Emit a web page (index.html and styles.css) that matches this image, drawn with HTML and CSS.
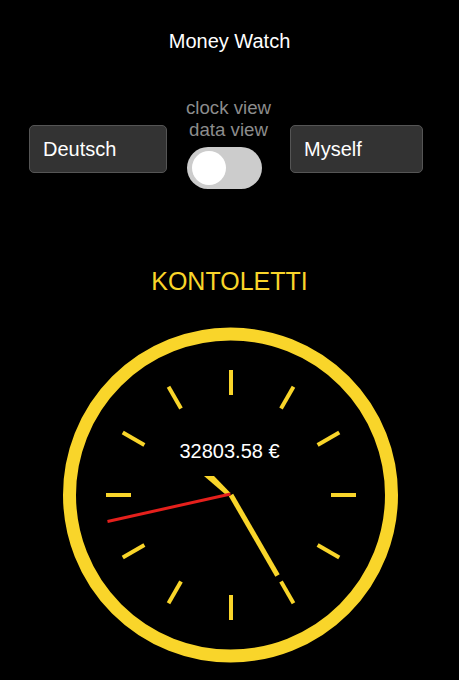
FILE: index.html
```html
<!DOCTYPE html>
<html lang="de">
<head>
    <meta charset="UTF-8">
    <meta name="viewport" content="width=device-width, initial-scale=1.0">
    <title>Money Watch</title>
    <link rel="stylesheet" href="styles.css">
</head>
<body>
    <h1 class="title">Money Watch</h1>

    <div class="controls">
        <select class="picker lang">
            <option>Deutsch</option>
            <option>English</option>
        </select>

        <div class="view-switch">
            <div class="view-label">clock view<br>data view</div>
            <label class="toggle">
                <input type="checkbox" id="viewToggle">
                <span class="knob"></span>
            </label>
        </div>

        <select class="picker person">
            <option>Myself</option>
        </select>
    </div>

    <h2 class="account">KONTOLETTI</h2>

    <svg class="clock" width="340" height="340" viewBox="0 0 340 340">
        <!-- Rahmen -->
        <circle cx="170.5" cy="170" r="161" fill="none" stroke="#f9d52a" stroke-width="13"/>
        <g transform="translate(171,170)">
            <!-- Stundenstriche -->
            <g stroke="#f9d52a" stroke-width="4">
                <line x1="0" y1="-125" x2="0" y2="-100"/>
                <line x1="0" y1="-125" x2="0" y2="-100" transform="rotate(30)"/>
                <line x1="0" y1="-125" x2="0" y2="-100" transform="rotate(60)"/>
                <line x1="0" y1="-125" x2="0" y2="-100" transform="rotate(90)"/>
                <line x1="0" y1="-125" x2="0" y2="-100" transform="rotate(120)"/>
                <line x1="0" y1="-125" x2="0" y2="-100" transform="rotate(150)"/>
                <line x1="0" y1="-125" x2="0" y2="-100" transform="rotate(180)"/>
                <line x1="0" y1="-125" x2="0" y2="-100" transform="rotate(210)"/>
                <line x1="0" y1="-125" x2="0" y2="-100" transform="rotate(240)"/>
                <line x1="0" y1="-125" x2="0" y2="-100" transform="rotate(270)"/>
                <line x1="0" y1="-125" x2="0" y2="-100" transform="rotate(300)"/>
                <line x1="0" y1="-125" x2="0" y2="-100" transform="rotate(330)"/>
            </g>
            <!-- Kontostand -->
            <text class="balance" x="-1.5" y="-37" text-anchor="middle">32803.58 €</text>
            <!-- Zeiger -->
            <line x1="0" y1="0" x2="0" y2="-93" stroke="#f9d52a" stroke-width="5" transform="rotate(150)"/>
            <polygon points="-27,-19 -17,-19 -0.5,-2 -5.5,-0.5" fill="#f9d52a"/>
            <line x1="-0.5" y1="-1" x2="-123.5" y2="26.5" stroke="#e5201c" stroke-width="3"/>
        </g>
    </svg>
</body>
</html>
```

FILE: styles.css
```css
body {
    margin: 0;
    background-color: #000;
    color: #fff;
    font-family: "Liberation Sans", Arial, sans-serif;
}
.title {
    margin: 0;
    padding-top: 30px;
    font-size: 20px;
    font-weight: normal;
    line-height: 23px;
    text-align: center;
}
.controls {
    display: flex;
    align-items: flex-start;
    margin-top: 44px;
    padding-left: 29px;
}
.picker {
    appearance: none;
    -webkit-appearance: none;
    box-sizing: border-box;
    height: 48px;
    margin-top: 28px;
    padding: 0 13px;
    background-color: #333;
    color: #fff;
    border: 1px solid #555;
    border-radius: 5px;
    font-family: "Liberation Sans", Arial, sans-serif;
    font-size: 20px;
}
.lang {
    width: 138px;
}
.person {
    width: 133px;
}
.view-switch {
    margin: 0 19px;
}
.view-label {
    color: #8c8c8c;
    font-size: 18.67px;
    line-height: 21.5px;
    text-align: center;
}
.toggle {
    display: block;
    position: relative;
    width: 75px;
    height: 42px;
    margin-top: 7px;
    margin-left: 1px;
    background-color: #ccc;
    border-radius: 21px;
    cursor: pointer;
}
.toggle input {
    display: none;
}
.knob {
    position: absolute;
    left: 5px;
    top: 4px;
    width: 34px;
    height: 34px;
    background-color: #fff;
    border-radius: 50%;
}
.account {
    margin: 78px 0 0;
    color: #f9d52a;
    font-size: 25px;
    font-weight: normal;
    line-height: 28px;
    text-align: center;
}
.clock {
    display: block;
    margin: 30px auto 0;
}
.balance {
    fill: #fff;
    font-family: "Liberation Sans", Arial, sans-serif;
    font-size: 20px;
}
```
